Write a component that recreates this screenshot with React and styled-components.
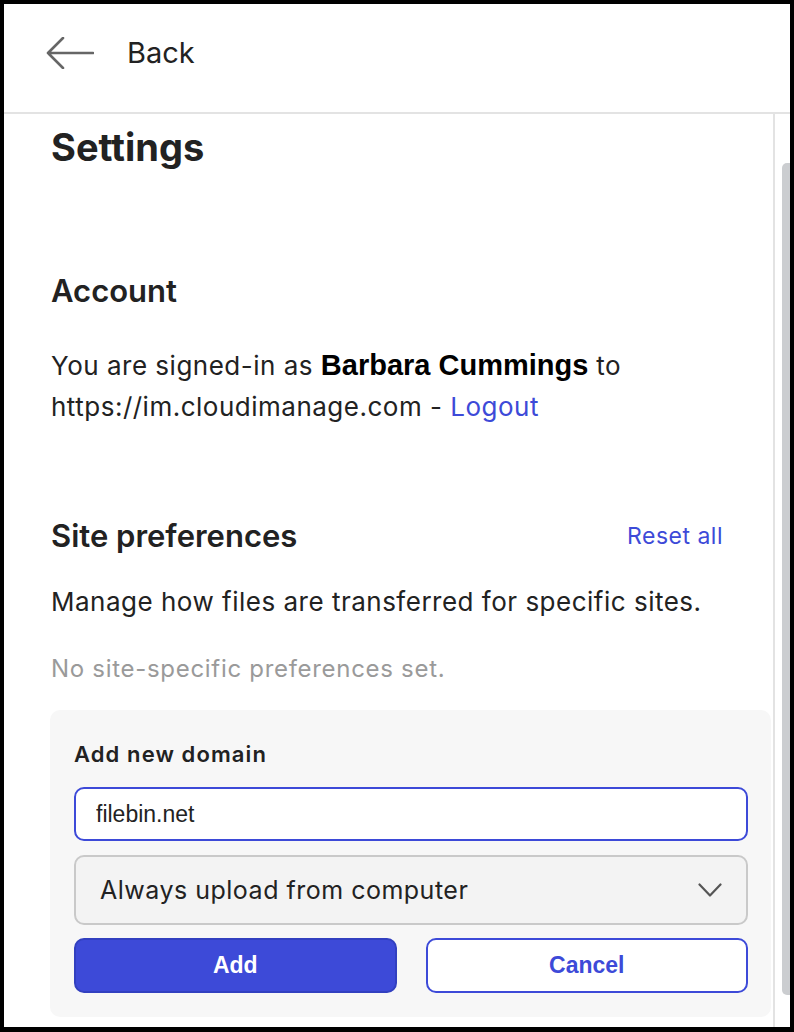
import styled, { createGlobalStyle } from 'styled-components';

const GlobalStyle = createGlobalStyle`
  html, body {
    margin: 0;
    padding: 0;
    background: #fff;
  }

  body {
    font-family: 'Inter', 'Noto Sans', sans-serif;
    color: #222;
  }

  * {
    box-sizing: border-box;
  }
`;

const BLUE = '#3d4ad8';

const BackArrow = () => (
  <svg width="48" height="32" viewBox="0 0 48 32" fill="none">
    <path
      d="M47 16H2M17 1L2 16l15 15"
      stroke="#666"
      strokeWidth="2.6"
      strokeLinecap="round"
      strokeLinejoin="round"
    />
  </svg>
);

const Chevron = () => (
  <svg width="24" height="14" viewBox="0 0 24 14" fill="none">
    <path
      d="M1.5 1.5L12 12.5 22.5 1.5"
      stroke="#555"
      strokeWidth="2.2"
      strokeLinecap="round"
      strokeLinejoin="round"
    />
  </svg>
);

const App = () => {
  return (
    <>
      <GlobalStyle />
      <Frame>
        <Header>
          <BackArrow />
          <BackLabel>Back</BackLabel>
        </Header>

        <Body>
          <Content>
            <PageTitle>Settings</PageTitle>

            <SectionTitle $gap={102}>Account</SectionTitle>
            <SignedIn>
              You are signed-in as <strong>Barbara Cummings</strong> to
              <br />
              https://im.cloudimanage.com - <Link href="#">Logout</Link>
            </SignedIn>

            <SectionHead>
              <SectionTitle>Site preferences</SectionTitle>
              <ResetLink href="#">Reset all</ResetLink>
            </SectionHead>
            <Description>
              Manage how files are transferred for specific sites.
            </Description>
            <EmptyNote>No site-specific preferences set.</EmptyNote>

            <DomainCard>
              <FieldLabel>Add new domain</FieldLabel>
              <DomainInput defaultValue="filebin.net" />
              <SelectBox>
                <span>Always upload from computer</span>
                <Chevron />
              </SelectBox>
              <Actions>
                <ActionButton $primary>Add</ActionButton>
                <ActionButton>Cancel</ActionButton>
              </Actions>
            </DomainCard>
          </Content>

          <Rail>
            <Thumb />
          </Rail>
        </Body>
      </Frame>
    </>
  );
};
export default App;

const Frame = styled.div`
  height: 1032px;
  border: 4px solid #000;
  border-bottom-width: 5px;
  display: flex;
  flex-direction: column;
  overflow: hidden;
  background: #fff;
`;

const Header = styled.header`
  flex: 0 0 110px;
  display: flex;
  align-items: center;
  gap: 33px;
  padding: 0 0 10px 42px;
  border-bottom: 2px solid #e3e3e3;
`;

const BackLabel = styled.span`
  font-size: 29px;
  line-height: 36px;
  color: #222;
`;

const Body = styled.div`
  flex: 1;
  display: flex;
  min-height: 0;
`;

const Content = styled.main`
  flex: 1;
  padding: 10px 0 0 47px;
  display: flex;
  flex-direction: column;
`;

const PageTitle = styled.h1`
  margin: 0;
  font-size: 38px;
  line-height: 46px;
  font-weight: 700;
  color: #222;
`;

const SectionTitle = styled.h2`
  margin: ${(p) => p.$gap || 0}px 0 0;
  font-size: 31px;
  line-height: 38px;
  font-weight: 600;
  color: #222;
`;

const SignedIn = styled.p`
  margin: 35px 0 0;
  font-size: 26px;
  line-height: 41px;
  letter-spacing: 0.5px;

  strong {
    font-family: 'Liberation Sans', Arial, sans-serif;
    font-size: 29px;
    line-height: 1;
    font-weight: 700;
    letter-spacing: 0;
    color: #000;
  }
`;

const Link = styled.a`
  color: ${BLUE};
  text-decoration: none;
`;

const SectionHead = styled.div`
  margin-top: 90px;
  padding-right: 50px;
  display: flex;
  align-items: center;
  justify-content: space-between;
`;

const ResetLink = styled(Link)`
  font-size: 23px;
  line-height: 30px;
  letter-spacing: 0.5px;
`;

const Description = styled.p`
  margin: 30px 0 0;
  font-size: 26px;
  line-height: 34px;
  letter-spacing: 0.5px;
`;

const EmptyNote = styled.p`
  margin: 35px 0 0;
  font-size: 24px;
  line-height: 30px;
  letter-spacing: 0.7px;
  color: #9a9a9a;
`;

const DomainCard = styled.section`
  margin: 26px 2px 0 -1px;
  padding: 30px 23px 24px 24px;
  background: #f7f7f7;
  border-radius: 10px;
  display: flex;
  flex-direction: column;
`;

const FieldLabel = styled.label`
  margin-bottom: 19px;
  font-size: 22px;
  line-height: 28px;
  font-weight: 600;
  letter-spacing: 1.1px;
  color: #222;
`;

const DomainInput = styled.input`
  height: 54px;
  padding: 0 0 0 20px;
  border: 2px solid ${BLUE};
  border-radius: 10px;
  background: #fff;
  font-family: 'Liberation Sans', Arial, sans-serif;
  font-size: 23px;
  color: #222;
  outline: none;
`;

const SelectBox = styled.div`
  margin-top: 14px;
  height: 70px;
  padding: 0 24px;
  border: 2px solid #c9c9c9;
  border-radius: 10px;
  background: #f3f3f3;
  display: flex;
  align-items: center;
  justify-content: space-between;
  font-size: 25px;
  letter-spacing: 0.5px;
  color: #222;
`;

const Actions = styled.div`
  margin-top: 13px;
  display: grid;
  grid-template-columns: 1fr 1fr;
  gap: 29px;
`;

const ActionButton = styled.button`
  height: 55px;
  border-radius: 10px;
  border: 2px solid ${(p) => (p.$primary ? '#3240c0' : BLUE)};
  background: ${(p) => (p.$primary ? BLUE : '#fff')};
  color: ${(p) => (p.$primary ? '#fff' : BLUE)};
  font-family: 'Liberation Sans', Arial, sans-serif;
  font-size: 23px;
  font-weight: 700;
  cursor: pointer;
`;

const Rail = styled.div`
  flex: 0 0 17px;
  border-left: 2px solid #e3e3e3;
  padding: 49px 0 0 7px;
`;

const Thumb = styled.div`
  height: 832px;
  background: #cbcdd0;
  border-radius: 5px 0 0 5px;
`;
